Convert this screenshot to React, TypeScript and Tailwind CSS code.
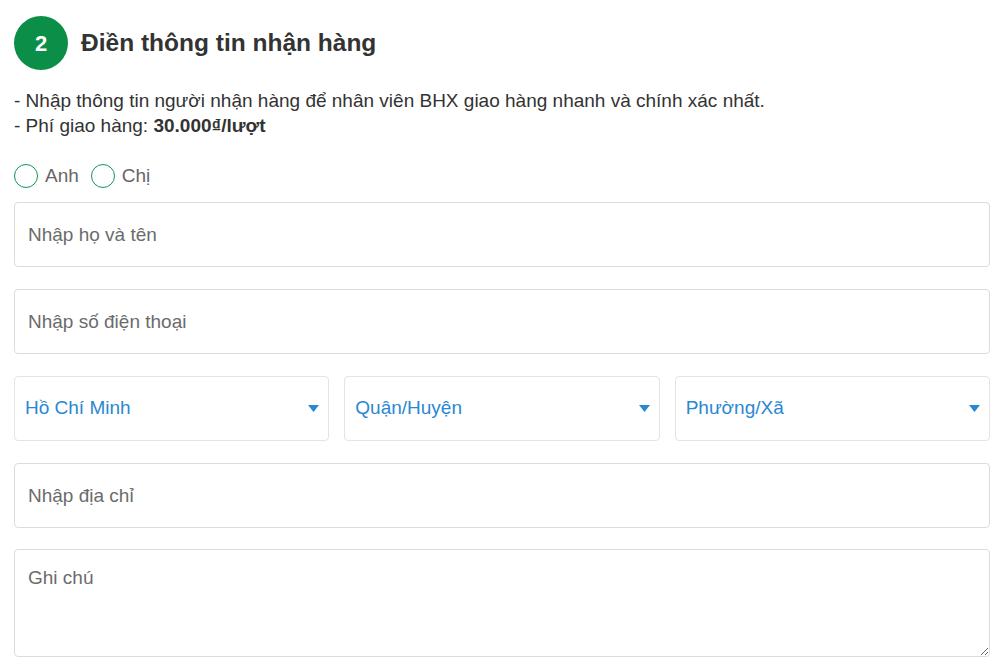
import React from "react";

const Caret = () => (
  <svg width="11" height="7" viewBox="0 0 11 7" className="shrink-0">
    <path d="M0 0 H11 L5.5 7 Z" fill="#2a88d2" />
  </svg>
);

const Select = ({ label }: { label: string }) => (
  <div className="flex h-[65px] flex-1 items-center justify-between rounded border border-[#e4e4e4] bg-white pl-[10px] pr-[9px]">
    <span className="text-[19px] text-[#2a88d2]">{label}</span>
    <Caret />
  </div>
);

const Field = ({ placeholder }: { placeholder: string }) => (
  <input
    placeholder={placeholder}
    className="h-[65px] w-full rounded border border-[#dcdcdc] bg-white px-[13px] text-[19px] text-[#333] outline-none placeholder:text-[#6b6b6b]"
  />
);

const Radio = ({ label }: { label: string }) => (
  <label className="flex items-center gap-[7px]">
    <span className="h-[24px] w-[24px] rounded-full border-[1.5px] border-[#10965a] bg-white" />
    <span className="text-[19px] leading-[24px] text-[#666]">{label}</span>
  </label>
);

export default function App() {
  return (
    <div
      className="min-h-screen w-full bg-white pl-[14px] pr-[10px] pt-[16px] text-[#333]"
      style={{ fontFamily: '"Liberation Sans", Arial, sans-serif' }}
    >
      <div className="flex items-center gap-[13px]">
        <div className="flex h-[54px] w-[54px] items-center justify-center rounded-full bg-[#0b8f48] text-[22px] font-bold text-white">
          2
        </div>
        <h1 className="text-[24.5px] font-bold text-[#333]">Điền thông tin nhận hàng</h1>
      </div>

      <div className="mt-[18px] text-[19px] leading-[25px] text-[#333]">
        <p>- Nhập thông tin người nhận hàng để nhân viên BHX giao hàng nhanh và chính xác nhất.</p>
        <p>
          - Phí giao hàng: <b>30.000₫/lượt</b>
        </p>
      </div>

      <div className="mt-[26px] flex items-center gap-[12px]">
        <Radio label="Anh" />
        <Radio label="Chị" />
      </div>

      <div className="mt-[14px] flex flex-col gap-[22px]">
        <Field placeholder="Nhập họ và tên" />
        <Field placeholder="Nhập số điện thoại" />
        <div className="flex gap-[15px]">
          <Select label="Hồ Chí Minh" />
          <Select label="Quận/Huyện" />
          <Select label="Phường/Xã" />
        </div>
        <Field placeholder="Nhập địa chỉ" />
        <textarea
          placeholder="Ghi chú"
          className="-mt-[1px] h-[108px] w-full rounded border border-[#dcdcdc] bg-white px-[13px] pt-[14px] text-[19px] text-[#333] outline-none placeholder:text-[#6b6b6b]"
        />
      </div>
    </div>
  );
}
